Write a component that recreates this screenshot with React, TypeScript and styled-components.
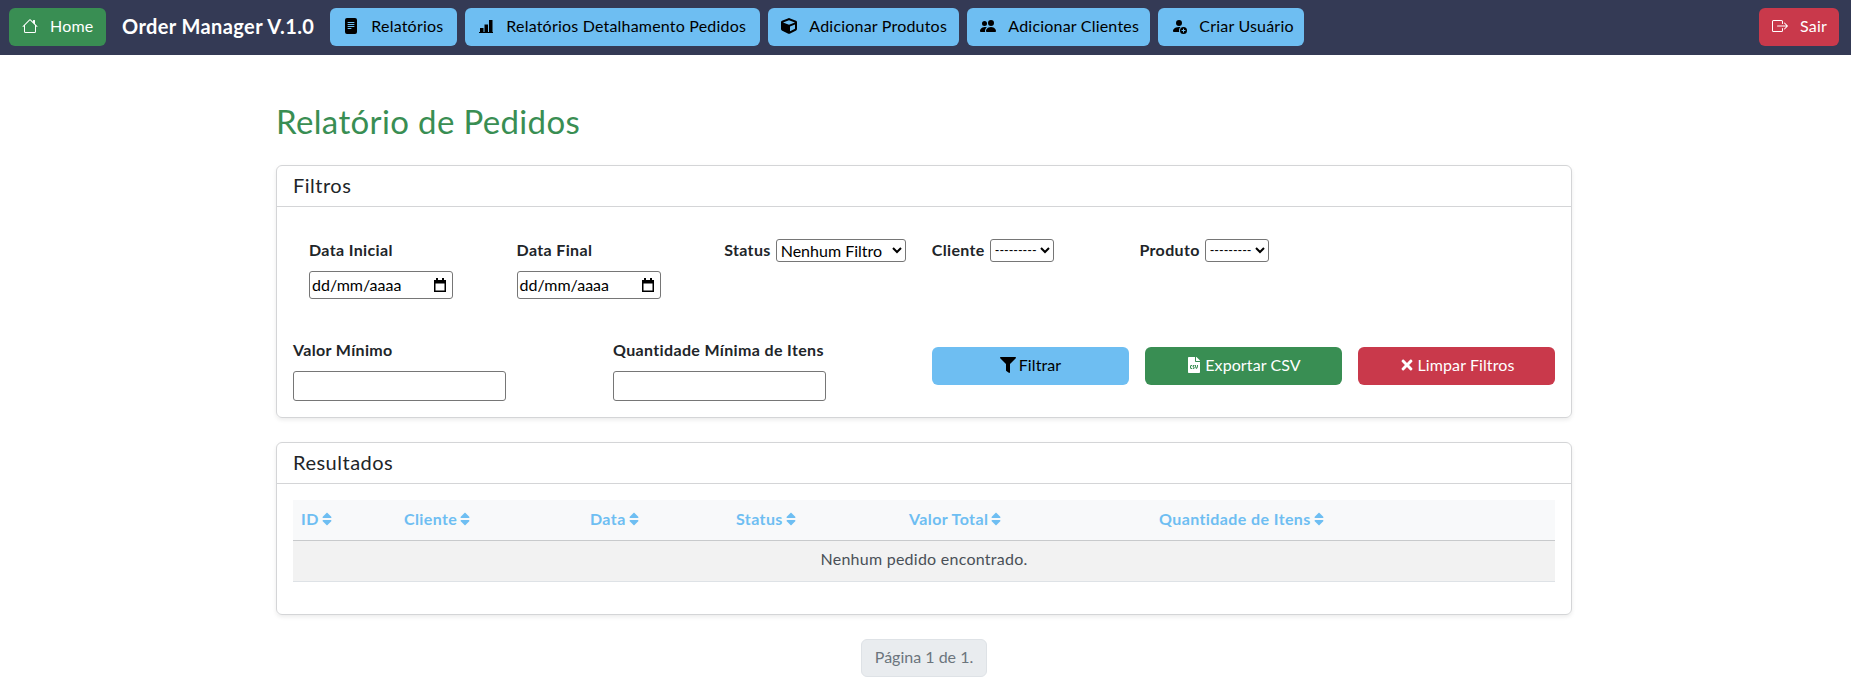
import { createGlobalStyle, styled } from "styled-components";
import {
  BsBoxArrowRight,
  BsFileTextFill,
  BsHouse,
  BsPeopleFill,
  BsPersonFillAdd,
} from "react-icons/bs";
import { FaCube, FaFileCsv, FaFilter, FaSort, FaTimes } from "react-icons/fa";

const GlobalStyle = createGlobalStyle`
  * { box-sizing: border-box; }
  body {
    margin: 0;
    background: #fff;
    color: #212529;
    font-family: "Lato", "Noto Sans", sans-serif;
    font-size: 16px;
    line-height: 1.5;
  }
`;

const colors = {
  info: "#6ebef2",
  success: "#398e53",
  danger: "#c9394b",
  nav: "#343a55",
};

const Navbar = styled.nav`
  display: flex;
  align-items: center;
  height: 55px;
  padding: 0 12px 1px 9px;
  background: ${colors.nav};
`;

const NavLinks = styled.div`
  display: flex;
  gap: 8px;
`;

const Brand = styled.span`
  margin: 0 16px;
  padding-bottom: 2px;
  color: #fff;
  font-size: 20px;
  font-weight: 700;
  letter-spacing: 0.4px;
  white-space: nowrap;
`;

const NavButton = styled.a<{ $tone: "info" | "success" | "danger"; $width: number }>`
  display: flex;
  align-items: center;
  gap: 12px;
  width: ${({ $width }) => $width}px;
  height: 38px;
  padding: 0 12px 2px 13px;
  border-radius: 6px;
  background: ${({ $tone }) => colors[$tone]};
  color: ${({ $tone }) => ($tone === "info" ? "#000" : "#fff")};
  letter-spacing: 0.2px;
  white-space: nowrap;

  svg {
    flex: none;
  }
`;

const Spacer = styled.div`
  flex: 1;
`;

const Main = styled.main`
  width: 1296px;
  margin-left: 276px;
  padding-top: 47px;
`;

const Title = styled.h1`
  margin: 0 0 24.6px;
  color: ${colors.success};
  font-size: 33px;
  font-weight: 400;
  letter-spacing: 0.35px;
  line-height: 38.4px;
`;

const Card = styled.section`
  margin-bottom: 24px;
  border: 1px solid #d4d5d7;
  border-radius: 6px;
  box-shadow: 0 2px 4px rgba(0, 0, 0, 0.08);
`;

const CardHeader = styled.h2`
  height: 41px;
  margin: 0;
  padding: 0 16px;
  border-bottom: 1px solid #d4d5d7;
  font-size: 20px;
  font-weight: 400;
  letter-spacing: 0.5px;
  line-height: 38px;
`;

const CardBody = styled.div`
  padding: 16px;
`;

const DateRow = styled.div`
  display: grid;
  grid-template-columns: repeat(5, 207.6px);
  height: 115px;
  padding: 15px 0 0 16px;
`;

const Label = styled.label`
  display: block;
  font-weight: 700;
  letter-spacing: 0.35px;
`;

const StackedLabel = styled(Label)`
  margin-bottom: 9px;
`;

const InlineField = styled.div`
  display: flex;
  align-items: flex-start;
  gap: 5px;
`;

const DateBox = styled.div`
  display: flex;
  align-items: center;
  justify-content: space-between;
  width: 144px;
  height: 28px;
  padding: 0 5px 0 2px;
  border: 1px solid #767676;
  border-radius: 3px;
  color: #000;
`;

const Select = styled.select<{ $width: number; $compact?: boolean }>`
  width: ${({ $width }) => $width}px;
  height: 23px;
  margin-top: 1px;
  border: 1px solid #767676;
  border-radius: 3px;
  background: #fff;
  color: #000;
  font-family: inherit;
  font-size: ${({ $compact }) => ($compact ? "12.5px" : "16px")};
`;

const BottomRow = styled.div`
  display: grid;
  grid-template-columns: 320px 319px 1fr;
`;

const TextInput = styled.input`
  display: block;
  width: 213px;
  height: 30px;
  border: 1px solid #767676;
  border-radius: 3px;
`;

const ActionGroup = styled.div`
  display: grid;
  grid-template-columns: repeat(3, 197px);
  column-gap: 16px;
`;

const ActionButton = styled.button<{ $tone: "info" | "success" | "danger" }>`
  display: flex;
  align-items: center;
  justify-content: center;
  gap: 3px;
  height: 38px;
  margin: 9px 0 0;
  padding: 0 0 3px;
  border: 0;
  border-radius: 6px;
  background: ${({ $tone }) => colors[$tone]};
  color: ${({ $tone }) => ($tone === "info" ? "#000" : "#fff")};
  font-family: inherit;
  font-size: 16px;
  letter-spacing: 0.1px;

  svg {
    width: auto;
    height: 16px;
  }
`;

const Table = styled.table`
  width: 100%;
  margin-bottom: 16px;
  border-collapse: collapse;
`;

const HeadCell = styled.th<{ $width: number }>`
  width: ${({ $width }) => $width}px;
  height: 40px;
  padding: 0 8px 2px;
  border-bottom: 1px solid #c8cacc;
  background: #f8f9fa;
  color: ${colors.info};
  font-weight: 700;
  letter-spacing: 0.4px;
  text-align: left;
  white-space: nowrap;

  svg {
    width: 10px;
    height: 16px;
    margin-left: 3px;
    vertical-align: -2px;
  }
`;

const EmptyCell = styled.td`
  height: 41px;
  padding: 0 0 3px;
  border-bottom: 1px solid #dee2e6;
  background: #f2f2f2;
  color: #495057;
  letter-spacing: 0.25px;
  text-align: center;
`;

const Pagination = styled.div`
  display: flex;
  justify-content: center;
`;

const PageLabel = styled.span`
  padding: 5px 13px 7px;
  border: 1px solid #dee2e6;
  border-radius: 6px;
  background: #e9ecef;
  color: #6c757d;
`;

const columns = [
  { label: "ID", width: 103 },
  { label: "Cliente", width: 186 },
  { label: "Data", width: 146 },
  { label: "Status", width: 173 },
  { label: "Valor Total", width: 250 },
  { label: "Quantidade de Itens", width: 404 },
];

// bars on a baseline, bootstrap's own bar chart icon has no baseline
function BarsIcon() {
  return (
    <svg width="16" height="16" viewBox="0 0 16 16" fill="currentColor">
      <path d="M1 14h14v1H1z" />
      <path d="M2 10h3.5v4H2zM6.5 6.5H10V14H6.5zM11 2h3.5v12H11z" />
    </svg>
  );
}

function CalendarIcon() {
  return (
    <svg width="14" height="16" viewBox="0 0 14 16" fill="currentColor">
      <path d="M3 1h2v2h4V1h2v2h2v12H1V3h2zM2.5 6.5v7h9v-7z" />
    </svg>
  );
}

export default function App() {
  return (
    <>
      <GlobalStyle />
      <Navbar>
        <NavButton $tone="success" $width={97}><BsHouse size={16} />Home</NavButton>
        <Brand>Order Manager V.1.0</Brand>
        <NavLinks>
          <NavButton $tone="info" $width={127}><BsFileTextFill size={16} />Relatórios</NavButton>
          <NavButton $tone="info" $width={295}><BarsIcon />Relatórios Detalhamento Pedidos</NavButton>
          <NavButton $tone="info" $width={191}><FaCube size={16} />Adicionar Produtos</NavButton>
          <NavButton $tone="info" $width={183}><BsPeopleFill size={16} />Adicionar Clientes</NavButton>
          <NavButton $tone="info" $width={146}><BsPersonFillAdd size={16} />Criar Usuário</NavButton>
        </NavLinks>
        <Spacer />
        <NavButton $tone="danger" $width={80}><BsBoxArrowRight size={16} />Sair</NavButton>
      </Navbar>
      <Main>
        <Title>Relatório de Pedidos</Title>
        <Card>
          <CardHeader>Filtros</CardHeader>
          <CardBody>
            <DateRow>
              <div>
                <StackedLabel>Data Inicial</StackedLabel>
                <DateBox>dd/mm/aaaa<CalendarIcon /></DateBox>
              </div>
              <div>
                <StackedLabel>Data Final</StackedLabel>
                <DateBox>dd/mm/aaaa<CalendarIcon /></DateBox>
              </div>
              <InlineField>
                <Label>Status</Label>
                <Select $width={130}><option>Nenhum Filtro</option></Select>
              </InlineField>
              <InlineField>
                <Label>Cliente</Label>
                <Select $width={64} $compact><option>---------</option></Select>
              </InlineField>
              <InlineField>
                <Label>Produto</Label>
                <Select $width={64} $compact><option>---------</option></Select>
              </InlineField>
            </DateRow>
            <BottomRow>
              <div>
                <StackedLabel>Valor Mínimo</StackedLabel>
                <TextInput />
              </div>
              <div>
                <StackedLabel>Quantidade Mínima de Itens</StackedLabel>
                <TextInput />
              </div>
              <ActionGroup>
                <ActionButton $tone="info"><FaFilter />Filtrar</ActionButton>
                <ActionButton $tone="success"><FaFileCsv />Exportar CSV</ActionButton>
                <ActionButton $tone="danger"><FaTimes />Limpar Filtros</ActionButton>
              </ActionGroup>
            </BottomRow>
          </CardBody>
        </Card>
        <Card>
          <CardHeader>Resultados</CardHeader>
          <CardBody>
            <Table>
              <thead>
                <tr>
                  {columns.map((column) => (
                    <HeadCell key={column.label} $width={column.width}>
                      {column.label}
                      <FaSort />
                    </HeadCell>
                  ))}
                </tr>
              </thead>
              <tbody>
                <tr>
                  <EmptyCell colSpan={6}>Nenhum pedido encontrado.</EmptyCell>
                </tr>
              </tbody>
            </Table>
          </CardBody>
        </Card>
        <Pagination>
          <PageLabel>Página 1 de 1.</PageLabel>
        </Pagination>
      </Main>
    </>
  );
}
